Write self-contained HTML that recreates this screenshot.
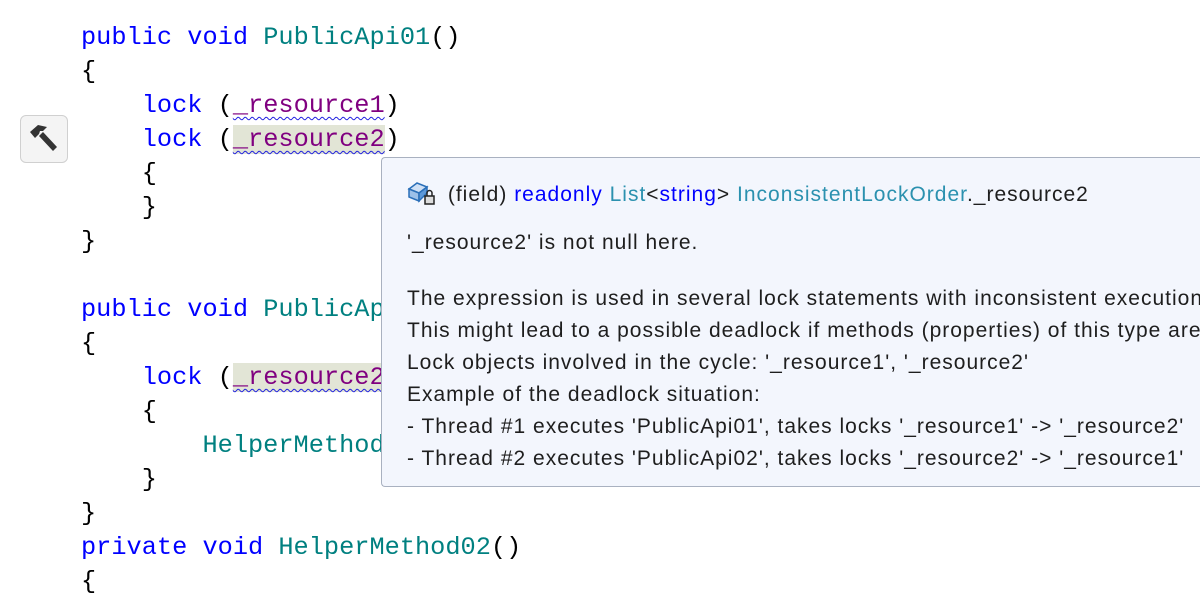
<!DOCTYPE html>
<html><head><meta charset="utf-8"><style>
html,body{margin:0;padding:0;width:1200px;height:600px;overflow:hidden;background:#fff}
.code{position:absolute;left:81px;top:21px;font-family:"Liberation Mono","DejaVu Sans Mono",monospace;font-size:25.3px;line-height:34px;white-space:pre;color:#000}
.k{color:#0000ff}.m{color:#008080}.f{color:#800080}
.w{text-decoration:underline wavy #2020e0;text-decoration-thickness:1px;text-underline-offset:4px}
.h{background:#e2e5d6}
.btn{position:absolute;left:20px;top:115px;width:48px;height:48px;border:1px solid #d0d0d0;border-radius:6px;background:#f4f4f4;box-sizing:border-box}
.tip{position:absolute;left:381px;top:157px;width:819px;height:330px;overflow:hidden;background:#f3f6fd;border:1px solid #a9b1c0;border-right:none;border-radius:4px 0 0 4px;box-sizing:border-box;font-family:"Liberation Sans",sans-serif;font-size:21px;letter-spacing:1px;color:#1e1e1e;white-space:pre}
.tip div{position:absolute;left:25px}
.b{color:#0000ff}.t{color:#2b91af}
</style></head><body>
<div class="code"><span class="k">public</span> <span class="k">void</span> <span class="m">PublicApi01</span>()
{
    <span class="k">lock</span> (<span class="f w">_resource1</span>)
    <span class="k">lock</span> (<span class="f w h">_resource2</span>)
    {
    }
}

<span class="k">public</span> <span class="k">void</span> <span class="m">PublicApi02</span>()
{
    <span class="k">lock</span> (<span class="f w h">_resource2</span>)
    {
        <span class="m">HelperMethod02</span>();
    }
}
<span class="k">private</span> <span class="k">void</span> <span class="m">HelperMethod02</span>()
{</div>
<div class="btn"><svg width="46" height="46" viewBox="0 0 46 46"><path d="M9 16 L17 9 L26 11 L22 15 L19 15 L18 18 L14 22 Z" fill="#333"/><path d="M18 20 L22 16 L36 31 L32 35 Z" fill="#333"/></svg></div>
<div class="tip">
<div style="top:21px;left:25px"><svg width="34" height="28" viewBox="0 0 34 28" style="vertical-align:-6px"><path d="M2 10 L10 4 L20 8 L12 14 Z" fill="#cfe0f5" stroke="#2a6fb8" stroke-width="1.5"/><path d="M2 10 L2 18 L12 22 L12 14 Z" fill="#9cc0e8" stroke="#2a6fb8" stroke-width="1.5"/><path d="M12 14 L20 8 L20 14 L12 22Z" fill="#5d98d8" stroke="#2a6fb8" stroke-width="1.5"/><rect x="18" y="17" width="9" height="8" fill="#ddd" stroke="#222" stroke-width="1.5"/><path d="M20 17 v-3 a2.5 2.5 0 0 1 5 0 v3" fill="none" stroke="#222" stroke-width="1.5"/></svg> (field) <span class="b">readonly</span> <span class="t">List</span>&lt;<span class="b">string</span>&gt; <span class="t">InconsistentLockOrder</span>._resource2</div>
<div style="top:73px">'_resource2' is not null here.</div>
<div style="top:129px">The expression is used in several lock statements with inconsistent execution order</div>
<div style="top:161px">This might lead to a possible deadlock if methods (properties) of this type are</div>
<div style="top:193px">Lock objects involved in the cycle: '_resource1', '_resource2'</div>
<div style="top:225px">Example of the deadlock situation:</div>
<div style="top:257px">- Thread #1 executes 'PublicApi01', takes locks '_resource1' -&gt; '_resource2'</div>
<div style="top:289px">- Thread #2 executes 'PublicApi02', takes locks '_resource2' -&gt; '_resource1'</div>
</div>
</body></html>
